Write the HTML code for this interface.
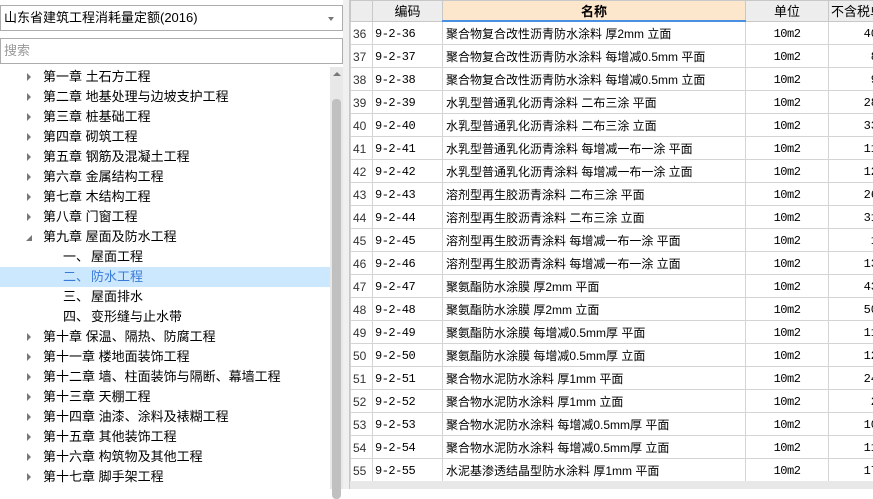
<!DOCTYPE html>
<html><head><meta charset="utf-8"><style>
*{margin:0;padding:0;box-sizing:border-box}
body{width:873px;height:489px;overflow:hidden;background:#fff;font-family:"Liberation Sans","Microsoft YaHei","Noto Sans CJK SC",sans-serif;position:relative}
.sel{position:absolute;left:0;top:5px;width:343px;height:26px;border:1px solid #acacac;font-size:13px;line-height:24px;padding-left:3px;color:#000}
.sel .ar{position:absolute;right:8px;top:11px;border-left:3px solid transparent;border-right:3px solid transparent;border-top:4px solid #777}
.srch{position:absolute;left:0;top:38px;width:343px;height:26px;border:1px solid #acacac;font-size:13px;line-height:24px;padding-left:3px;color:#999}
.tree{position:absolute;left:0;top:67px;width:330px;height:422px;font-size:13px;color:#000}
.tree div{height:20px;line-height:20px;position:relative;white-space:nowrap}
.tree .c{padding-left:43px}
.tree .c:before{content:"";position:absolute;left:27px;top:6px;border-top:4px solid transparent;border-bottom:4px solid transparent;border-left:4px solid #777}
.tree .o:before{left:26px;top:8px;border:none;width:0;height:0;border-left:6px solid transparent;border-bottom:6px solid #777}
.tree .s{padding-left:63px}
.tree .s span{display:inline-block;width:28px}
.tree .hl{background:#cce8ff;color:#3b7bd8}
.vs{position:absolute;left:330px;top:67px;width:13px;height:422px;background:#e8e8e8}
.vs .up{position:absolute;left:3px;top:5px;border-left:4px solid transparent;border-right:4px solid transparent;border-bottom:4px solid #777}
.vs .th{position:absolute;left:2px;top:32px;width:9px;height:400px;background:#c0c0c0;border-radius:4px}
.split{position:absolute;left:343px;top:0;width:7px;height:489px;background:#f0f0f0;border-right:1px solid #c8c8c8}
table{position:absolute;left:350px;top:0;border-collapse:collapse;font-size:12px;table-layout:fixed;width:530px}
td,th{border:1px solid #d4d4d4;height:23px;padding:0 2px;white-space:nowrap;overflow:hidden}
td{padding-top:2px}
th{height:20px;background:#ededed;font-weight:normal;font-size:13px;border-color:#c8c8c8}
th.n{background:#fde7cc;font-weight:bold;border-bottom:2px solid #4a90e2}
td.r{color:#333;font-family:"Liberation Sans",sans-serif}
td.k{font-family:"Liberation Mono",monospace;font-size:12px;letter-spacing:-0.5px}
td.u{text-align:center;font-family:"Liberation Mono",monospace;font-size:12px;letter-spacing:-0.5px}
td.p{text-align:right;font-family:"Liberation Mono",monospace;font-size:12px}
td.m{font-size:12px;padding-left:3px}
.hs{position:absolute;left:350px;top:481px;width:523px;height:8px;background:#e8e8e8}
</style></head><body>
<div class="sel">山东省建筑工程消耗量定额(2016)<span class="ar"></span></div>
<div class="srch">搜索</div>
<div class="tree">
<div class="c">第一章 土石方工程</div>
<div class="c">第二章 地基处理与边坡支护工程</div>
<div class="c">第三章 桩基础工程</div>
<div class="c">第四章 砌筑工程</div>
<div class="c">第五章 钢筋及混凝土工程</div>
<div class="c">第六章 金属结构工程</div>
<div class="c">第七章 木结构工程</div>
<div class="c">第八章 门窗工程</div>
<div class="c o">第九章 屋面及防水工程</div>
<div class="s"><span>一、</span>屋面工程</div>
<div class="s hl"><span>二、</span>防水工程</div>
<div class="s"><span>三、</span>屋面排水</div>
<div class="s"><span>四、</span>变形缝与止水带</div>
<div class="c">第十章 保温、隔热、防腐工程</div>
<div class="c">第十一章 楼地面装饰工程</div>
<div class="c">第十二章 墙、柱面装饰与隔断、幕墙工程</div>
<div class="c">第十三章 天棚工程</div>
<div class="c">第十四章 油漆、涂料及裱糊工程</div>
<div class="c">第十五章 其他装饰工程</div>
<div class="c">第十六章 构筑物及其他工程</div>
<div class="c">第十七章 脚手架工程</div>
</div>
<div class="vs"><div class="up"></div><div class="th"></div></div>
<div class="split"></div>
<table>
<colgroup><col style="width:22px"><col style="width:70px"><col style="width:303px"><col style="width:83px"><col style="width:52px"></colgroup>
<tr><th></th><th>编码</th><th class="n">名称</th><th>单位</th><th>不含税单</th></tr>
<tr><td class="r">36</td><td class="k">9-2-36</td><td class="m">聚合物复合改性沥青防水涂料 厚2mm 立面</td><td class="u">10m2</td><td class="p">40</td></tr>
<tr><td class="r">37</td><td class="k">9-2-37</td><td class="m">聚合物复合改性沥青防水涂料 每增减0.5mm 平面</td><td class="u">10m2</td><td class="p">8</td></tr>
<tr><td class="r">38</td><td class="k">9-2-38</td><td class="m">聚合物复合改性沥青防水涂料 每增减0.5mm 立面</td><td class="u">10m2</td><td class="p">9</td></tr>
<tr><td class="r">39</td><td class="k">9-2-39</td><td class="m">水乳型普通乳化沥青涂料 二布三涂 平面</td><td class="u">10m2</td><td class="p">28</td></tr>
<tr><td class="r">40</td><td class="k">9-2-40</td><td class="m">水乳型普通乳化沥青涂料 二布三涂 立面</td><td class="u">10m2</td><td class="p">33</td></tr>
<tr><td class="r">41</td><td class="k">9-2-41</td><td class="m">水乳型普通乳化沥青涂料 每增减一布一涂 平面</td><td class="u">10m2</td><td class="p">11</td></tr>
<tr><td class="r">42</td><td class="k">9-2-42</td><td class="m">水乳型普通乳化沥青涂料 每增减一布一涂 立面</td><td class="u">10m2</td><td class="p">12</td></tr>
<tr><td class="r">43</td><td class="k">9-2-43</td><td class="m">溶剂型再生胶沥青涂料 二布三涂 平面</td><td class="u">10m2</td><td class="p">26</td></tr>
<tr><td class="r">44</td><td class="k">9-2-44</td><td class="m">溶剂型再生胶沥青涂料 二布三涂 立面</td><td class="u">10m2</td><td class="p">31</td></tr>
<tr><td class="r">45</td><td class="k">9-2-45</td><td class="m">溶剂型再生胶沥青涂料 每增减一布一涂 平面</td><td class="u">10m2</td><td class="p">1</td></tr>
<tr><td class="r">46</td><td class="k">9-2-46</td><td class="m">溶剂型再生胶沥青涂料 每增减一布一涂 立面</td><td class="u">10m2</td><td class="p">13</td></tr>
<tr><td class="r">47</td><td class="k">9-2-47</td><td class="m">聚氨酯防水涂膜 厚2mm 平面</td><td class="u">10m2</td><td class="p">43</td></tr>
<tr><td class="r">48</td><td class="k">9-2-48</td><td class="m">聚氨酯防水涂膜 厚2mm 立面</td><td class="u">10m2</td><td class="p">50</td></tr>
<tr><td class="r">49</td><td class="k">9-2-49</td><td class="m">聚氨酯防水涂膜 每增减0.5mm厚 平面</td><td class="u">10m2</td><td class="p">11</td></tr>
<tr><td class="r">50</td><td class="k">9-2-50</td><td class="m">聚氨酯防水涂膜 每增减0.5mm厚 立面</td><td class="u">10m2</td><td class="p">12</td></tr>
<tr><td class="r">51</td><td class="k">9-2-51</td><td class="m">聚合物水泥防水涂料 厚1mm 平面</td><td class="u">10m2</td><td class="p">24</td></tr>
<tr><td class="r">52</td><td class="k">9-2-52</td><td class="m">聚合物水泥防水涂料 厚1mm 立面</td><td class="u">10m2</td><td class="p">2</td></tr>
<tr><td class="r">53</td><td class="k">9-2-53</td><td class="m">聚合物水泥防水涂料 每增减0.5mm厚 平面</td><td class="u">10m2</td><td class="p">10</td></tr>
<tr><td class="r">54</td><td class="k">9-2-54</td><td class="m">聚合物水泥防水涂料 每增减0.5mm厚 立面</td><td class="u">10m2</td><td class="p">11</td></tr>
<tr><td class="r">55</td><td class="k">9-2-55</td><td class="m">水泥基渗透结晶型防水涂料 厚1mm 平面</td><td class="u">10m2</td><td class="p">17</td></tr>
</table>
<div class="hs"></div>
</body></html>
